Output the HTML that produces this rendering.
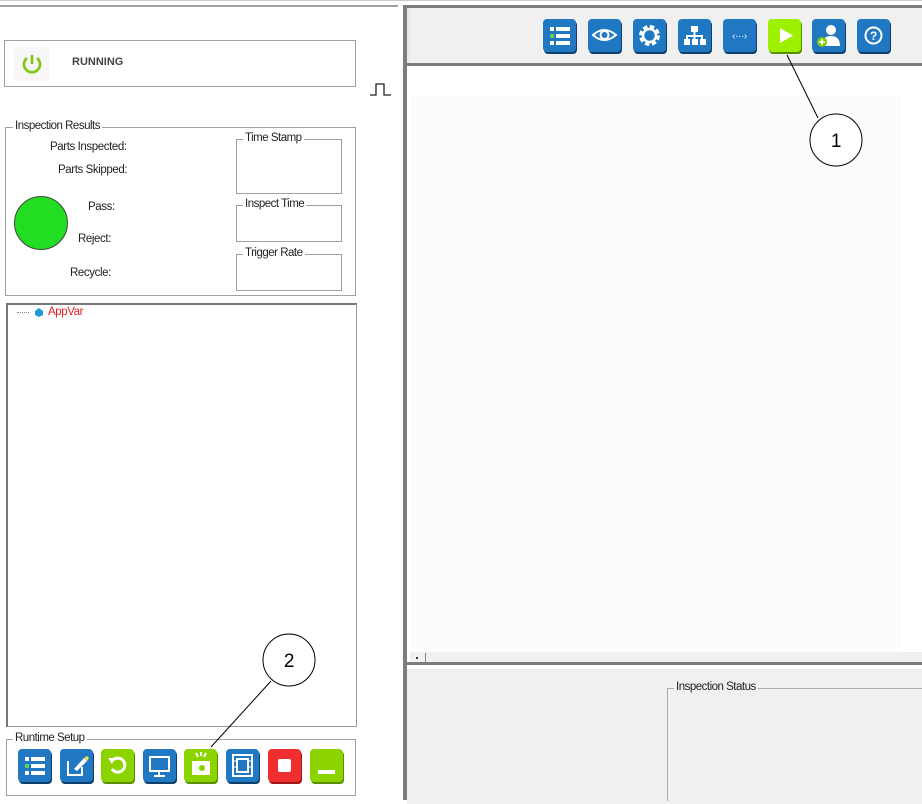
<!DOCTYPE html>
<html><head><style>
body{margin:0;width:922px;height:800px;position:relative;background:#fff;font-family:"Liberation Sans",sans-serif;font-size:11.5px;letter-spacing:-0.4px;color:#222;overflow:hidden}
.a{position:absolute}
.btn{position:absolute;width:33px;height:33px;border-radius:4px;background:#1f78c1;box-shadow:1px 2px 0 #0d3f6a}
.btn svg{position:absolute;left:0;top:0}
.g{background:#8cd400;box-shadow:1px 2px 0 #5a8f00}
.r{background:#ef2f2f;box-shadow:1px 2px 0 #a01515}
.lg{position:absolute;background:#fff;padding:0 2px;font-size:11.5px;letter-spacing:-0.5px}
.box{position:absolute;border:1px solid #a0a0a0}
</style></head><body>
<div class="a" style="left:0;top:0;width:922px;height:1px;background:#ccc"></div>
<div class="a" style="left:0;top:5px;width:398px;height:2px;background:#a0a0a0"></div>
<div class="box" style="left:4px;top:40px;width:350px;height:45px"></div>
<div class="a" style="left:14px;top:47px;width:35px;height:34px;border-radius:4px;background:#f6f6f6"></div>
<svg class="a" style="left:21px;top:52px" width="22" height="24" viewBox="0 0 22 24"><path d="M6 6 A8 8 0 1 0 16 6" fill="none" stroke="#7ac70c" stroke-width="2.6"/><line x1="11" y1="3" x2="11" y2="12" stroke="#7ac70c" stroke-width="2.6"/></svg>
<div class="a" style="left:72px;top:56px;font-weight:bold;font-size:11px;letter-spacing:0;color:#444">RUNNING</div>
<svg class="a" style="left:369px;top:82px" width="28" height="16"><path d="M1 13H7V2H15V13H22" fill="none" stroke="#222" stroke-width="1.3"/></svg>
<div class="box" style="left:5px;top:127px;width:349px;height:167px"></div>
<div class="lg" style="left:13px;top:120px">Inspection Results</div>
<div class="a" style="left:50px;top:141px">Parts Inspected:</div>
<div class="a" style="left:58px;top:164px">Parts Skipped:</div>
<div class="a" style="left:88px;top:201px">Pass:</div>
<div class="a" style="left:78px;top:233px">Reject:</div>
<div class="a" style="left:70px;top:267px">Recycle:</div>
<div class="a" style="left:14px;top:196px;width:52px;height:52px;border-radius:50%;background:#22dd22;border:1px solid #444"></div>
<div class="box" style="left:236px;top:139px;width:104px;height:53px"></div><div class="lg" style="left:243px;top:132px">Time Stamp</div>
<div class="box" style="left:236px;top:205px;width:104px;height:35px"></div><div class="lg" style="left:243px;top:198px">Inspect Time</div>
<div class="box" style="left:236px;top:254px;width:104px;height:35px"></div><div class="lg" style="left:243px;top:247px">Trigger Rate</div>
<div class="a" style="left:6px;top:303px;width:348px;height:421px;border:1px solid #999;border-top:2px solid #777;border-left:2px solid #777"></div>
<div class="a" style="left:17px;top:312px;width:12px;border-top:1px dotted #888"></div>
<svg class="a" style="left:34px;top:307px" width="10" height="11"><path d="M5 1L9 4V8L5 10L1 8V4Z" fill="#1e9bd7"/></svg>
<div class="a" style="left:48px;top:306px;color:#e52020">AppVar</div>
<div class="box" style="left:6px;top:739px;width:348px;height:55px"></div>
<div class="lg" style="left:13px;top:732px">Runtime Setup</div>
<div class="btn" style="left:18px;top:749px"><svg width="33" height="33"><rect x="7" y="8" width="4" height="4" fill="#fff"/><rect x="7" y="15" width="4" height="4" fill="#6c6"/><rect x="7" y="22" width="4" height="4" fill="#fff"/><rect x="13" y="8" width="14" height="4" fill="#fff"/><rect x="13" y="15" width="14" height="4" fill="#fff"/><rect x="13" y="22" width="14" height="4" fill="#fff"/></svg></div>
<div class="btn" style="left:60px;top:749px"><svg width="33" height="33"><path d="M8 12V26H22V18" fill="none" stroke="#fff" stroke-width="2"/><path d="M14 20L24 9L27 12L17 22Z" fill="#fff"/><path d="M24 9L27 12L29 9L27 7Z" fill="#f5e24a"/></svg></div>
<div class="btn g" style="left:101px;top:749px"><svg width="33" height="33"><path d="M11 20A7 7 0 1 0 12 11" fill="none" stroke="#fff" stroke-width="3"/><path d="M7 9L14 9L11 15Z" fill="#fff"/></svg></div>
<div class="btn" style="left:143px;top:749px"><svg width="33" height="33"><rect x="7" y="8" width="19" height="14" fill="none" stroke="#fff" stroke-width="2"/><path d="M16 22V26M11 27H22" stroke="#fff" stroke-width="2"/></svg></div>
<div class="btn g" style="left:184px;top:749px"><svg width="33" height="33"><rect x="8" y="12" width="18" height="14" rx="1" fill="#fff"/><circle cx="18" cy="19" r="3" fill="#8cd400"/><path d="M12 4L14 8M17 3V7M22 4L20 8" stroke="#fff" stroke-width="2"/></svg></div>
<div class="btn" style="left:226px;top:749px"><svg width="33" height="33"><rect x="7" y="6" width="19" height="21" fill="none" stroke="#fff" stroke-width="2"/><rect x="11" y="10" width="11" height="13" fill="none" stroke="#fff" stroke-width="2"/><path d="M7 12H11M7 18H11M22 12H26M22 18H26" stroke="#fff"/></svg></div>
<div class="btn r" style="left:268px;top:749px"><svg width="33" height="33"><rect x="10" y="10" width="13" height="13" rx="2" fill="#fff"/></svg></div>
<div class="btn g" style="left:310px;top:749px"><svg width="33" height="33"><rect x="8" y="21" width="17" height="4" fill="#fff"/></svg></div>
<div class="a" style="left:403px;top:5px;width:4px;height:795px;background:#7d7d7d"></div>
<div class="a" style="left:407px;top:5px;width:515px;height:3px;background:#7d7d7d"></div>
<div class="a" style="left:407px;top:8px;width:515px;height:55px;background:#f0f0f0;border-left:3px solid #e8e8e8"></div>
<div class="a" style="left:407px;top:63px;width:515px;height:3px;background:#7d7d7d"></div>
<div class="a" style="left:410px;top:66px;width:512px;height:586px;background:#fff"></div>
<div class="a" style="left:410px;top:95px;width:492px;height:557px;background:#fcfcfc"></div>
<div class="a" style="left:410px;top:652px;width:512px;height:10px;background:#f0f0f0"></div>
<div class="a" style="left:416px;top:657px;width:2px;height:2px;background:#333"></div>
<div class="a" style="left:425px;top:653px;width:1px;height:9px;background:#888"></div>
<div class="a" style="left:407px;top:662px;width:515px;height:3px;background:#7d7d7d"></div>
<div class="a" style="left:407px;top:665px;width:515px;height:135px;background:#f0f0f0;border-top:4px solid #fff"></div>
<div class="a" style="left:667px;top:688px;width:255px;height:112px;border-top:1px solid #aaa;border-left:1px solid #aaa"></div>
<div class="lg" style="left:674px;top:681px;background:#f0f0f0">Inspection Status</div>
<div class="btn" style="left:543px;top:19px"><svg width="33" height="33"><rect x="7" y="8" width="4" height="4" fill="#fff"/><rect x="7" y="15" width="4" height="4" fill="#6c6"/><rect x="7" y="22" width="4" height="4" fill="#fff"/><rect x="13" y="8" width="14" height="4" fill="#fff"/><rect x="13" y="15" width="14" height="4" fill="#fff"/><rect x="13" y="22" width="14" height="4" fill="#fff"/></svg></div>
<div class="btn" style="left:588px;top:19px"><svg width="33" height="33"><path d="M5 16Q16 6 28 16Q16 26 5 16Z" fill="none" stroke="#fff" stroke-width="2"/><circle cx="16.5" cy="16" r="4" fill="none" stroke="#fff" stroke-width="2"/></svg></div>
<div class="btn" style="left:633px;top:19px"><svg width="33" height="33"><circle cx="16.5" cy="16.5" r="8" fill="none" stroke="#fff" stroke-width="5" stroke-dasharray="4 2.3"/><circle cx="16.5" cy="16.5" r="6.5" fill="none" stroke="#fff" stroke-width="2.5"/></svg></div>
<div class="btn" style="left:678px;top:19px"><svg width="33" height="33"><rect x="13" y="7" width="7" height="6" fill="#fff"/><path d="M16.5 13V17M9 20V17H24V20M16.5 17V20" stroke="#fff" stroke-width="2" fill="none"/><rect x="6" y="20" width="6" height="6" fill="#fff"/><rect x="14" y="20" width="6" height="6" fill="#fff"/><rect x="22" y="20" width="6" height="6" fill="#fff"/></svg></div>
<div class="btn" style="left:723px;top:19px"><svg width="33" height="33"><text x="16.5" y="20" font-size="10" fill="#fff" text-anchor="middle" font-family="Liberation Sans">‹···›</text></svg></div>
<div class="btn g" style="left:768px;top:19px;background:#9cf000"><svg width="33" height="33"><path d="M12 9L25 16.5L12 24Z" fill="#fff"/></svg></div>
<div class="btn" style="left:812px;top:19px"><svg width="33" height="33"><circle cx="19" cy="11" r="5" fill="#fff"/><path d="M10 27Q10 17 19 17Q28 17 28 27Z" fill="#fff"/><circle cx="10" cy="23" r="5" fill="#7ac70c"/><path d="M10 20V26M7 23H13" stroke="#fff" stroke-width="1.6"/></svg></div>
<div class="btn" style="left:857px;top:19px"><svg width="33" height="33"><circle cx="16.5" cy="16.5" r="8" fill="none" stroke="#fff" stroke-width="2"/><text x="16.5" y="21" font-size="12" font-weight="bold" fill="#fff" text-anchor="middle" font-family="Liberation Sans">?</text></svg></div>
<svg class="a" style="left:0;top:0" width="922" height="800"><line x1="787" y1="55" x2="818" y2="118" stroke="#000"/><circle cx="836" cy="140" r="26" fill="#fff" stroke="#000"/><text x="836" y="147" font-size="19" text-anchor="middle" font-family="Liberation Sans">1</text><line x1="211" y1="747" x2="271" y2="681" stroke="#000"/><circle cx="289" cy="660" r="26" fill="#fff" stroke="#000"/><text x="289" y="667" font-size="19" text-anchor="middle" font-family="Liberation Sans">2</text></svg>
</body></html>
